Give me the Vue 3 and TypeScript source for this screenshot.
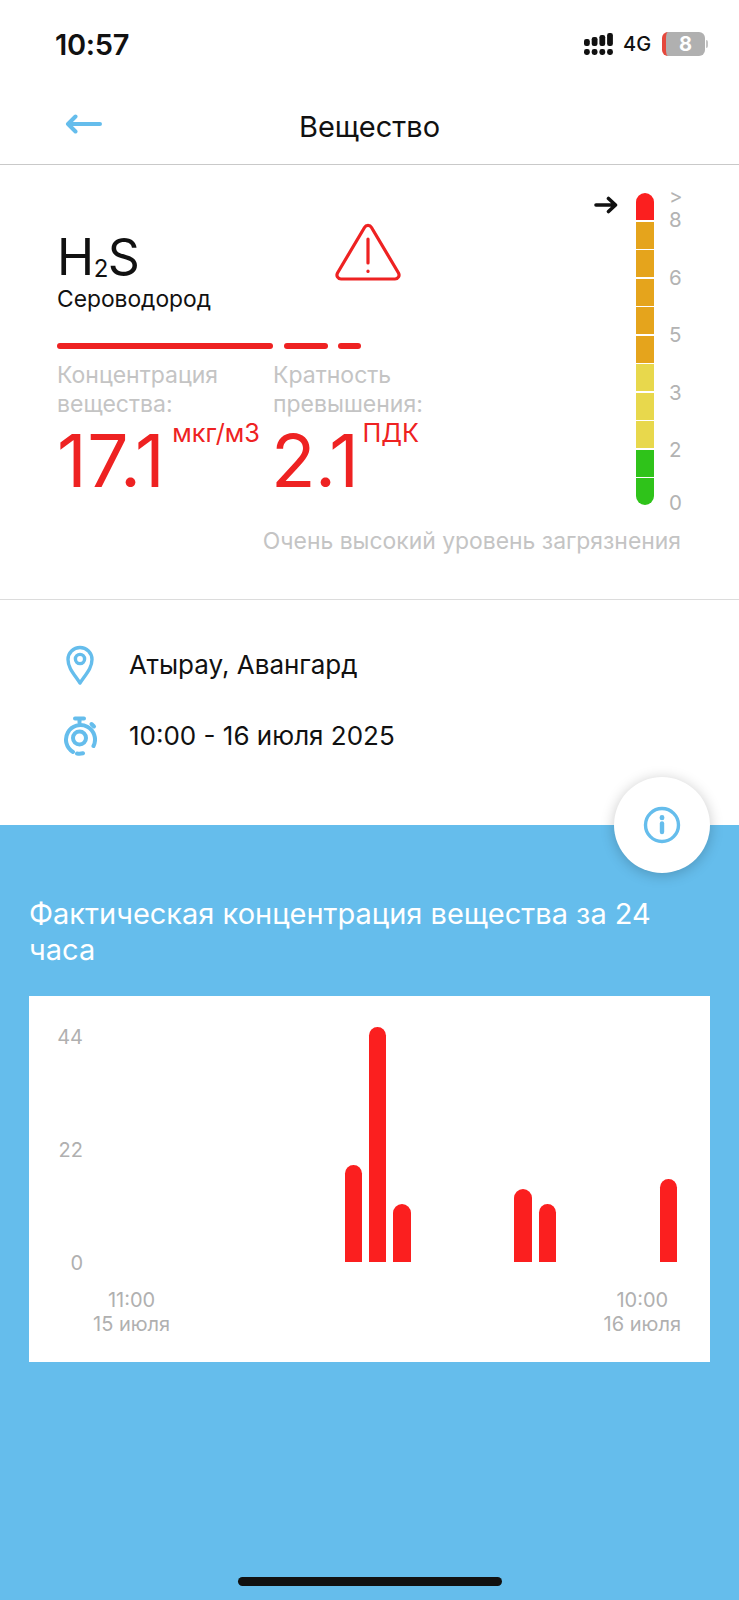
<template>
  <div class="screen">
    <header class="status">
      <span class="clock">10:57</span>
      <div class="status-right">
        <svg class="signal" width="31" height="24" viewBox="0 0 31 24">
          <g fill="#111">
            <rect x="0" y="7" width="5.800" height="7" rx="2.200" />
            <rect x="0" y="17" width="5.800" height="6" rx="2.400" />
            <rect x="7.700" y="5" width="5.800" height="9" rx="2.200" />
            <rect x="7.700" y="17" width="5.800" height="6" rx="2.400" />
            <rect x="15.400" y="3" width="5.800" height="11" rx="2.200" />
            <rect x="15.400" y="17" width="5.800" height="6" rx="2.400" />
            <rect x="23.100" y="1" width="5.800" height="13" rx="2.200" />
            <rect x="23.100" y="17" width="5.800" height="6" rx="2.400" />
          </g>
        </svg>
        <span class="net">4G</span>
        <div class="battery">
          <div class="battery-body"><span>8</span></div>
          <div class="battery-nub"></div>
        </div>
      </div>
    </header>

    <nav class="topbar">
      <svg class="back" width="38" height="20" viewBox="0 0 38 20" fill="none" stroke="#65bdec" stroke-width="4" stroke-linecap="round" stroke-linejoin="round">
        <path d="M3 10h32M10.500 2.500 3 10l7.500 7.500" />
      </svg>
      <h1 class="title">Вещество</h1>
    </nav>

    <section class="summary">
      <div class="summary-main">
        <div class="substance">
          <div class="substance-text">
            <div class="formula">H<sub>2</sub>S</div>
            <div class="substance-name">Сероводород</div>
          </div>
          <svg class="warning" width="68" height="60" viewBox="0 0 68 60" fill="none" stroke="#ee2222" stroke-width="3.200" stroke-linecap="round" stroke-linejoin="round">
            <path d="M30.500 5.500 3.500 51c-1.500 2.800.3 6 3.500 6h54c3.200 0 5-3.200 3.500-6L37.500 5.500c-1.600-2.800-5.400-2.800-7 0Z" />
            <path d="M34 17v24" />
            <path d="M34 49v.500" />
          </svg>
        </div>
        <div class="dashes">
          <i class="dash-long"></i>
          <i class="dash-mid"></i>
          <i class="dash-short"></i>
        </div>
        <div class="metrics">
          <div class="metric metric-conc">
            <div class="metric-label">Концентрация<br />вещества:</div>
            <div class="metric-value">17.1<span class="unit">мкг/м3</span></div>
          </div>
          <div class="metric metric-ratio">
            <div class="metric-label">Кратность<br />превышения:</div>
            <div class="metric-value">2.1<span class="unit">ПДК</span></div>
          </div>
        </div>
      </div>

      <div class="gauge">
        <svg class="gauge-arrow" width="24" height="18" viewBox="0 0 24 18" fill="none" stroke="#111" stroke-width="3.600" stroke-linecap="round" stroke-linejoin="round">
          <path d="M2 9h19M14.500 2.500 21.500 9l-7 6.500" />
        </svg>
        <div class="scale">
          <div v-for="(c, i) in segments" :key="i" class="segment" :class="c"></div>
        </div>
        <div class="scale-labels">
          <span class="gt">&gt;</span>
          <span v-for="l in labels" :key="l">{{ l }}</span>
          <span class="zero">0</span>
        </div>
      </div>

      <p class="level">Очень высокий уровень загрязнения</p>
    </section>

    <section class="info">
      <div class="info-row">
        <svg width="28" height="40" viewBox="0 0 28 40" fill="none" stroke="#65bdec" stroke-width="3.400" stroke-linejoin="round">
          <path d="M14 38C8 29 2 23 2 14.500a12 12 0 0 1 24 0C26 23 20 29 14 38Z" />
          <circle cx="14" cy="14" r="4.600" />
        </svg>
        <span>Атырау, Авангард</span>
      </div>
      <div class="info-row">
        <svg width="34" height="40" viewBox="0 0 34 40" fill="none" stroke="#65bdec" stroke-width="4" stroke-linecap="round">
          <path d="M12 2.500h9M16.500 2.500v4" />
          <path d="m28.500 8 2.500 2.500" />
          <path d="M10 36A14.500 14.500 0 1 1 30.500 30" />
          <circle cx="16.500" cy="22" r="6.500" />
          <path d="M14 37.500a15 15 0 0 0 6-.2" />
        </svg>
        <span>10:00 - 16 июля 2025</span>
      </div>
    </section>

    <section class="history">
      <button class="info-btn" type="button" aria-label="info">
        <svg width="38" height="38" viewBox="0 0 38 38" fill="none" stroke="#65bdec">
          <circle cx="19" cy="19" r="16.500" stroke-width="3.400" />
          <path d="M19 17.500v8.500" stroke-width="4.400" stroke-linecap="round" />
          <path d="M19 11.500v.4" stroke-width="4.800" stroke-linecap="round" />
        </svg>
      </button>
      <h2 class="history-title">Фактическая концентрация вещества за 24 часа</h2>
      <div class="chart">
        <div class="plot">
          <div class="y-axis">
            <span>44</span>
            <span>22</span>
            <span>0</span>
          </div>
          <div class="bars">
            <div v-for="(v, i) in hours" :key="i" class="slot">
              <div v-if="v > 0" class="bar" :style="{ height: v * pxPerUnit + 'px' }"></div>
            </div>
          </div>
        </div>
        <div class="x-axis">
          <div class="tick tick-start">11:00<br />15 июля</div>
          <div class="tick tick-end">10:00<br />16 июля</div>
        </div>
      </div>
    </section>

    <div class="home-indicator"></div>
  </div>
</template>

<script setup lang="ts">
const segments: string[] = [
  'red',
  'orange',
  'orange',
  'orange',
  'orange',
  'orange',
  'yellow',
  'yellow',
  'yellow',
  'green',
  'green'
]

const labels: string[] = ['8', '6', '5', '3', '2']

const pxPerUnit = 5.11

// 24 часа, с 11:00 до 10:00
const hours: number[] = [
  0, 0, 0, 0, 0, 0, 0, 0, 0, 0, 19, 46, 11.4, 0, 0, 0, 0, 14.3, 11.4, 0, 0, 0, 0, 16.2
]
</script>

<style>
html,
body {
  margin: 0;
  background: #fff;
}
</style>

<style scoped>
.screen {
  position: relative;
  width: 739px;
  height: 1600px;
  overflow: hidden;
  display: flex;
  flex-direction: column;
  background: #fff;
  font-family: Inter, "Noto Sans", sans-serif;
  color: #111;
}

.status {
  height: 89px;
  flex: none;
  box-sizing: border-box;
  padding: 25px 31px 0 55px;
  display: flex;
  justify-content: space-between;
  align-items: flex-start;
}

.clock {
  font-size: 29px;
  line-height: 40px;
  font-weight: 600;
  letter-spacing: -0.3px;
}

.status-right {
  display: flex;
  align-items: center;
  height: 40px;
  margin-top: -1px;
}

.signal {
  margin-right: 8px;
}

.net {
  font-size: 20px;
  font-weight: 500;
  width: 39px;
}

.battery {
  display: flex;
  align-items: center;
}

.battery-body {
  width: 43px;
  height: 24px;
  box-sizing: border-box;
  border-radius: 6px;
  background: #b0b0b0;
  border-left: 4px solid #e5483c;
  color: #fff;
  font-size: 20px;
  font-weight: 700;
  line-height: 24px;
  text-align: center;
}

.battery-nub {
  width: 2px;
  height: 8px;
  margin-left: 1px;
  border-radius: 0 2px 2px 0;
  background: #c4c4c4;
}

.topbar {
  height: 76px;
  flex: none;
  box-sizing: border-box;
  border-bottom: 1px solid #c9c9c9;
  position: relative;
  display: flex;
  align-items: center;
  justify-content: center;
  padding-top: 1px;
}

.back {
  position: absolute;
  left: 65px;
  top: 25px;
}

.title {
  margin: 0;
  font-size: 29px;
  font-weight: 400;
  line-height: 36px;
}

.summary {
  height: 435px;
  flex: none;
  box-sizing: border-box;
  border-bottom: 1px solid #dcdcdc;
  padding: 27px 58px 0 57px;
  display: grid;
  grid-template-columns: 1fr auto;
  grid-template-rows: 321px auto;
}

.summary-main {
  min-width: 0;
}

.substance {
  display: flex;
  align-items: flex-start;
  padding-top: 37px;
  height: 151px;
  box-sizing: border-box;
}

.substance-text {
  width: 278px;
}

.formula {
  font-size: 50px;
  line-height: 56px;
  letter-spacing: -0.5px;
}

.formula sub {
  font-size: 24px;
  line-height: 0;
  vertical-align: -2px;
}

.substance-name {
  font-size: 22.800px;
  line-height: 28px;
}

.warning {
  margin-top: -7px;
  margin-left: -1px;
  display: block;
}

.dashes {
  display: flex;
  height: 6px;
  gap: 11px;
}

.dashes i {
  display: block;
  background: #ee2222;
  border-radius: 3px;
}

.dash-long {
  width: 216px;
}

.dash-mid {
  width: 44px;
}

.dash-short {
  width: 23px;
  margin-left: -1px;
}

.metrics {
  display: flex;
  margin-top: 12px;
}

.metric {
  flex: none;
}

.metric-conc {
  width: 216px;
}

.metric-label {
  font-size: 23px;
  line-height: 28.500px;
  color: #c4c4c4;
}

.metric-value {
  font-size: 73px;
  line-height: 60px;
  color: #ee2222;
  letter-spacing: 0.5px;
  white-space: nowrap;
  margin-top: 13px;
}

.metric-ratio .metric-value {
  letter-spacing: -0.5px;
  margin-left: -2px;
}

.unit {
  font-size: 25.300px;
  letter-spacing: 0;
  vertical-align: 45px;
  line-height: 0;
  margin-left: 7px;
}

.metric-ratio .unit {
  margin-left: 4px;
}

.gauge {
  display: flex;
  align-items: flex-start;
}

.gauge-arrow {
  margin-top: 4px;
  margin-right: 18px;
}

.scale {
  width: 18px;
  height: 312px;
  display: flex;
  flex-direction: column;
  gap: 1.500px;
  border-radius: 9px;
  overflow: hidden;
  margin-top: 1px;
}

.segment {
  flex: 1;
}

.red {
  background: #fb1f1f;
}

.orange {
  background: #e5a41c;
}

.yellow {
  background: #e8d84c;
}

.green {
  background: #2fc31a;
}

.scale-labels {
  width: 12px;
  margin-left: 15px;
  display: flex;
  flex-direction: column;
  gap: 33.500px;
  font-size: 20.500px;
  line-height: 24px;
  color: #b3b3b3;
}

.scale-labels .gt {
  height: 10px;
  line-height: 10px;
  margin-bottom: -27.500px;
}

.scale-labels .zero {
  margin-top: -5px;
}

.level {
  grid-column: 1 / -1;
  margin: 14px 0 0;
  text-align: right;
  font-size: 22.900px;
  line-height: 28px;
  color: #c4c4c4;
  white-space: nowrap;
}

.info {
  height: 225px;
  flex: none;
  box-sizing: border-box;
  padding: 45px 0 0 63px;
  display: flex;
  flex-direction: column;
  gap: 31px;
}

.info-row {
  display: flex;
  align-items: center;
  height: 40px;
  font-size: 26px;
  line-height: 32px;
}

.info-row svg {
  width: 34px;
  flex: none;
  margin-right: 32px;
}

.history {
  flex: 1;
  position: relative;
  background: #65bdec;
  padding: 71px 29px 0;
}

.info-btn {
  position: absolute;
  right: 29px;
  top: -48px;
  width: 96px;
  height: 96px;
  padding: 0;
  border: 0;
  border-radius: 50%;
  background: #fff;
  box-shadow: 0 2px 14px rgba(0, 0, 0, 0.22);
  display: flex;
  align-items: center;
  justify-content: center;
}

.history-title {
  margin: 0;
  color: #fff;
  font-size: 29px;
  font-weight: 400;
  line-height: 36px;
}

.chart {
  margin-top: 28px;
  height: 366px;
  background: #fff;
  box-sizing: border-box;
  padding-top: 30px;
}

.plot {
  display: flex;
  height: 236px;
}

.y-axis {
  width: 54px;
  display: flex;
  flex-direction: column;
  align-items: flex-end;
  justify-content: space-between;
  font-size: 20px;
  line-height: 24px;
  color: #b0b0b0;
  margin-top: -1px;
  height: 250px;
  flex: none;
}

.bars {
  margin-left: 19px;
  width: 559px;
  display: flex;
  align-items: flex-end;
}

.slot {
  width: 24.250px;
  flex: none;
}

.bar {
  width: 17.500px;
  background: #fb1f1f;
  border-radius: 9px 9px 0 0;
}

.x-axis {
  display: flex;
  justify-content: space-between;
  padding: 26px 29px 0 64px;
}

.tick {
  font-size: 20px;
  line-height: 24px;
  color: #b0b0b0;
  text-align: center;
}

.home-indicator {
  position: absolute;
  left: 238px;
  bottom: 14px;
  width: 264px;
  height: 9px;
  border-radius: 5px;
  background: #111;
}
</style>
